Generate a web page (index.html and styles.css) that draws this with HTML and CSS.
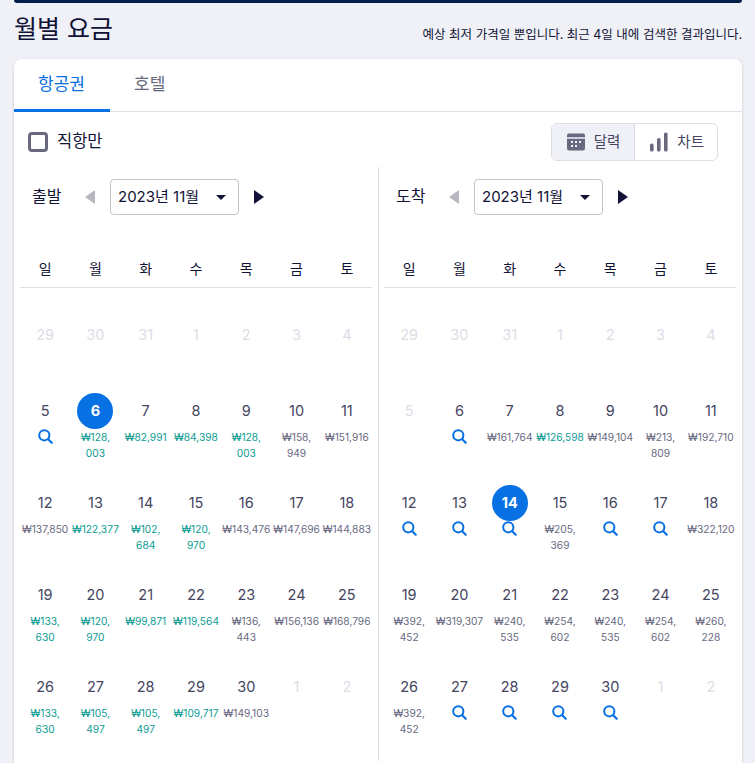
FILE: index.html
```html
<!DOCTYPE html>
<html lang="ko">
<head>
  <meta charset="UTF-8" />
  <title>월별 요금</title>
  <link rel="stylesheet" href="styles.css">
</head>
<body>
  <svg width="0" height="0" class="defs">
    <symbol id="mag" viewBox="0 0 15 15"><circle cx="6.3" cy="6.3" r="5.1" fill="none" stroke="currentColor" stroke-width="2"/><path d="M10.2 10.2l3.5 3.5" stroke="currentColor" stroke-width="2.2" stroke-linecap="round"/></symbol>
  </svg>

  <div class="topbar"></div>

  <div class="heading">
    <h2>월별 요금</h2>
    <p>예상 최저 가격일 뿐입니다. 최근 4일 내에 검색한 결과입니다.</p>
  </div>

  <div class="card">
    <div class="tabs">
      <div class="tab active">항공권</div>
      <div class="tab">호텔</div>
    </div>

    <div class="options">
      <label class="check"><span class="box"></span><span class="check-label">직항만</span></label>
      <div class="toggle">
        <div class="toggle-btn on">
          <svg width="20" height="20" viewBox="0 0 20 20"><path fill="#68697f" fill-rule="evenodd" d="M3 1.5h14a2 2 0 0 1 2 2v1.7H1V3.5a2 2 0 0 1 2-2zM1 6.7h18v9.8a2 2 0 0 1-2 2H3a2 2 0 0 1-2-2zM5 9v2h2V9zm4 0v2h2V9zm4 0v2h2V9zM5 13v2h2v-2zm4 0v2h2v-2z"/></svg>
          <span class="label">달력</span>
        </div>
        <div class="toggle-btn">
          <svg width="20" height="20" viewBox="0 0 20 20" fill="#68697f"><rect x="1" y="11.5" width="3.6" height="8" rx="1.6"/><rect x="8" y="6" width="3.6" height="13.5" rx="1.6"/><rect x="15" y="0.5" width="3.6" height="19" rx="1.6"/></svg>
          <span class="label">차트</span>
        </div>
      </div>
    </div>

    <div class="months">
      <section class="month">
        <div class="month-head">
          <span class="dir">출발</span>
          <span class="arrow left off"></span>
          <div class="select">2023년 11월<span class="caret"></span></div>
          <span class="arrow right"></span>
        </div>
        <div class="weekdays"><span>일</span><span>월</span><span>화</span><span>수</span><span>목</span><span>금</span><span>토</span></div>
        <div class="days">
          <div class="day off"><b>29</b></div><div class="day off"><b>30</b></div><div class="day off"><b>31</b></div><div class="day off"><b>1</b></div><div class="day off"><b>2</b></div><div class="day off"><b>3</b></div><div class="day off"><b>4</b></div>

          <div class="day"><b>5</b><svg class="mag"><use href="#mag"/></svg></div>
          <div class="day sel"><b>6</b><span class="price low">₩128,<br>003</span></div>
          <div class="day"><b>7</b><span class="price low">₩82,991</span></div>
          <div class="day"><b>8</b><span class="price low">₩84,398</span></div>
          <div class="day"><b>9</b><span class="price low">₩128,<br>003</span></div>
          <div class="day"><b>10</b><span class="price">₩158,<br>949</span></div>
          <div class="day"><b>11</b><span class="price">₩151,916</span></div>

          <div class="day"><b>12</b><span class="price">₩137,850</span></div>
          <div class="day"><b>13</b><span class="price low">₩122,377</span></div>
          <div class="day"><b>14</b><span class="price low">₩102,<br>684</span></div>
          <div class="day"><b>15</b><span class="price low">₩120,<br>970</span></div>
          <div class="day"><b>16</b><span class="price">₩143,476</span></div>
          <div class="day"><b>17</b><span class="price">₩147,696</span></div>
          <div class="day"><b>18</b><span class="price">₩144,883</span></div>

          <div class="day"><b>19</b><span class="price low">₩133,<br>630</span></div>
          <div class="day"><b>20</b><span class="price low">₩120,<br>970</span></div>
          <div class="day"><b>21</b><span class="price low">₩99,871</span></div>
          <div class="day"><b>22</b><span class="price low">₩119,564</span></div>
          <div class="day"><b>23</b><span class="price">₩136,<br>443</span></div>
          <div class="day"><b>24</b><span class="price">₩156,136</span></div>
          <div class="day"><b>25</b><span class="price">₩168,796</span></div>

          <div class="day"><b>26</b><span class="price low">₩133,<br>630</span></div>
          <div class="day"><b>27</b><span class="price low">₩105,<br>497</span></div>
          <div class="day"><b>28</b><span class="price low">₩105,<br>497</span></div>
          <div class="day"><b>29</b><span class="price low">₩109,717</span></div>
          <div class="day"><b>30</b><span class="price">₩149,103</span></div>
          <div class="day off"><b>1</b></div><div class="day off"><b>2</b></div>
        </div>
      </section>

      <section class="month">
        <div class="month-head">
          <span class="dir">도착</span>
          <span class="arrow left off"></span>
          <div class="select">2023년 11월<span class="caret"></span></div>
          <span class="arrow right"></span>
        </div>
        <div class="weekdays"><span>일</span><span>월</span><span>화</span><span>수</span><span>목</span><span>금</span><span>토</span></div>
        <div class="days">
          <div class="day off"><b>29</b></div><div class="day off"><b>30</b></div><div class="day off"><b>31</b></div><div class="day off"><b>1</b></div><div class="day off"><b>2</b></div><div class="day off"><b>3</b></div><div class="day off"><b>4</b></div>

          <div class="day off"><b>5</b></div>
          <div class="day"><b>6</b><svg class="mag"><use href="#mag"/></svg></div>
          <div class="day"><b>7</b><span class="price">₩161,764</span></div>
          <div class="day"><b>8</b><span class="price low">₩126,598</span></div>
          <div class="day"><b>9</b><span class="price">₩149,104</span></div>
          <div class="day"><b>10</b><span class="price">₩213,<br>809</span></div>
          <div class="day"><b>11</b><span class="price">₩192,710</span></div>

          <div class="day"><b>12</b><svg class="mag"><use href="#mag"/></svg></div>
          <div class="day"><b>13</b><svg class="mag"><use href="#mag"/></svg></div>
          <div class="day sel"><b>14</b><svg class="mag"><use href="#mag"/></svg></div>
          <div class="day"><b>15</b><span class="price">₩205,<br>369</span></div>
          <div class="day"><b>16</b><svg class="mag"><use href="#mag"/></svg></div>
          <div class="day"><b>17</b><svg class="mag"><use href="#mag"/></svg></div>
          <div class="day"><b>18</b><span class="price">₩322,120</span></div>

          <div class="day"><b>19</b><span class="price">₩392,<br>452</span></div>
          <div class="day"><b>20</b><span class="price">₩319,307</span></div>
          <div class="day"><b>21</b><span class="price">₩240,<br>535</span></div>
          <div class="day"><b>22</b><span class="price">₩254,<br>602</span></div>
          <div class="day"><b>23</b><span class="price">₩240,<br>535</span></div>
          <div class="day"><b>24</b><span class="price">₩254,<br>602</span></div>
          <div class="day"><b>25</b><span class="price">₩260,<br>228</span></div>

          <div class="day"><b>26</b><span class="price">₩392,<br>452</span></div>
          <div class="day"><b>27</b><svg class="mag"><use href="#mag"/></svg></div>
          <div class="day"><b>28</b><svg class="mag"><use href="#mag"/></svg></div>
          <div class="day"><b>29</b><svg class="mag"><use href="#mag"/></svg></div>
          <div class="day"><b>30</b><svg class="mag"><use href="#mag"/></svg></div>
          <div class="day off"><b>1</b></div><div class="day off"><b>2</b></div>
        </div>
      </section>
    </div>
  </div>
</body>
</html>
```

FILE: styles.css
```css
html, body {
  height: 763px;
  overflow: hidden;
}
body {
  margin: 0;
  padding: 0 13px 0 14px;
  background: #eff1f7;
  color: #111236;
  font-family: Inter, "Noto Sans CJK KR", sans-serif;
}
.defs {
  position: absolute;
}
.topbar {
  height: 3px;
  background: #02204a;
  border-radius: 0 0 4px 4px;
}
.heading {
  display: flex;
  justify-content: space-between;
  align-items: flex-end;
  height: 56px;
  padding-bottom: 14px;
  box-sizing: border-box;
}
.heading h2 {
  margin: 0;
  font-size: 25px;
  font-weight: 400;
  line-height: 32px;
}
.heading p {
  margin: 0 0 1px;
  font-size: 12.5px;
  line-height: 18px;
}
.card {
  background: white;
  border-radius: 8px 8px 0 0;
  box-shadow: 0 1px 3px rgba(37, 32, 31, 0.2);
  height: 720px;
}
.tabs {
  display: flex;
  height: 53px;
  border-bottom: 1px solid #dddde5;
  box-sizing: border-box;
}
.tab {
  height: 53px;
  box-sizing: border-box;
  padding: 14px 24px 0;
  font-size: 17px;
  line-height: 22px;
  color: #68697f;
}
.tab.active {
  width: 96px;
  color: #0770e3;
  border-bottom: 3px solid #0770e3;
}
.options {
  display: flex;
  justify-content: space-between;
  align-items: center;
  padding: 11px 24px 0 14px;
  height: 38px;
}
.check {
  display: flex;
  align-items: center;
  gap: 9px;
  font-size: 16.5px;
}
.check-label {
  padding-bottom: 5px;
}
.label {
  padding-bottom: 3px;
}
.box {
  width: 20px;
  height: 20px;
  box-sizing: border-box;
  border: 3px solid #68697f;
  border-radius: 4px;
}
.toggle {
  display: flex;
  border: 1px solid #dddde5;
  border-radius: 6px;
  height: 38px;
  box-sizing: border-box;
  overflow: hidden;
}
.toggle-btn {
  display: flex;
  align-items: center;
  gap: 8px;
  padding: 0 13px 0 14px;
  font-size: 14.5px;
  color: #444560;
}
.toggle-btn.on {
  padding-right: 14px;
  background: #eff1f7;
  border-right: 1px solid #dddde5;
}
.months {
  display: grid;
  grid-template-columns: 365px 363px;
  margin-top: 6px;
}
.month {
  padding: 12px 6px 0;
}
.month:first-child {
  border-right: 1px solid #dddde5;
}
.month:last-child {
  padding-left: 5px;
}
.month-head {
  display: flex;
  align-items: center;
  height: 36px;
  padding-left: 12px;
}
.dir {
  width: 53px;
  padding-bottom: 4px;
  font-size: 16px;
}
.arrow {
  width: 0;
  height: 0;
  border-top: 7px solid transparent;
  border-bottom: 7px solid transparent;
}
.arrow.left {
  border-right: 10px solid #111236;
  margin-right: 15px;
}
.arrow.right {
  border-left: 10px solid #111236;
  margin-left: 15px;
}
.arrow.off {
  opacity: 0.3;
}
.select {
  position: relative;
  width: 129px;
  height: 36px;
  box-sizing: border-box;
  border: 1px solid #c2c3cd;
  border-radius: 4px;
  padding-left: 7px;
  font-size: 15px;
  line-height: 34px;
}
.caret {
  position: absolute;
  right: 12px;
  top: 15px;
  border-top: 5px solid #111236;
  border-left: 5px solid transparent;
  border-right: 5px solid transparent;
}
.weekdays {
  display: grid;
  grid-template-columns: repeat(7, 1fr);
  margin-top: 44px;
  height: 28px;
  border-bottom: 1px solid #dddde5;
  text-align: center;
  font-size: 14px;
  line-height: 20px;
}
.days {
  display: grid;
  grid-template-columns: repeat(7, 1fr);
  padding-top: 29px;
}
.day {
  display: flex;
  flex-direction: column;
  align-items: center;
  padding-bottom: 24px;
  min-height: 52px;
}
.day b {
  width: 36px;
  height: 36px;
  border-radius: 50%;
  text-align: center;
  font-weight: 400;
  font-size: 14.5px;
  line-height: 36px;
  color: #444560;
}
.day.off b {
  color: #dddde5;
}
.day.sel b {
  background: #0770e3;
  color: white;
  font-weight: 700;
}
.price {
  text-align: center;
  font-size: 10.2px;
  line-height: 16px;
  color: #68697f;
  white-space: nowrap;
}
.price.low {
  color: #0b9c92;
}
.mag {
  width: 15px;
  height: 15px;
  color: #0770e3;
}
```
